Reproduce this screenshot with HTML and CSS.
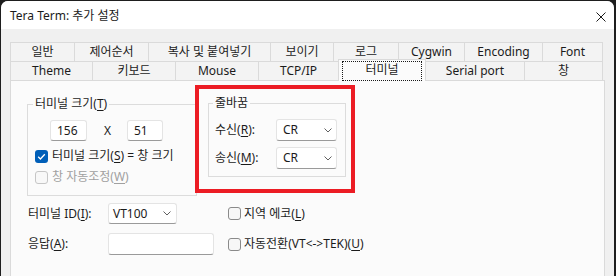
FILE: index.html
```html
<!DOCTYPE html>
<html lang="ko">
<head>
<meta charset="utf-8">
<title>Tera Term: 추가 설정</title>
<link rel="stylesheet" href="styles.css">
</head>
<body>
<div class="window">
  <div class="titlebar">
    <span class="title">Tera Term: 추가 설정</span>
    <svg class="close" width="10" height="10" viewBox="0 0 10 10"><path d="M0.5 0.5L9.5 9.5M9.5 0.5L0.5 9.5" stroke="#1a1a1a" stroke-width="1" fill="none"/></svg>
  </div>
  <div class="tabs">
    <div class="tabrow row1">
      <div class="tab">일반</div>
      <div class="tab">제어순서</div>
      <div class="tab">복사 및 붙여넣기</div>
      <div class="tab">보이기</div>
      <div class="tab">로그</div>
      <div class="tab">Cygwin</div>
      <div class="tab">Encoding</div>
      <div class="tab last">Font</div>
    </div>
    <div class="tabrow row2">
      <div class="tab">Theme</div>
      <div class="tab">키보드</div>
      <div class="tab">Mouse</div>
      <div class="tab">TCP/IP</div>
      <div class="tab selected"><span class="focus">터미널</span></div>
      <div class="tab">Serial port</div>
      <div class="tab last">창</div>
    </div>
  </div>
  <div class="panel">
    <div class="top">
      <fieldset class="group g1">
        <legend>터미널 크기(<u>T</u>)</legend>
        <div class="sizerow">
          <div class="edit w37">156</div>
          <span class="x">X</span>
          <div class="edit w36">51</div>
        </div>
        <div class="check first"><span class="box checked"><svg width="13" height="13" viewBox="0 0 13 13"><path d="M3.2 6.8L5.4 9L9.8 4.3" stroke="#fff" stroke-width="1.3" fill="none"/></svg></span><span>터미널 크기(<u>S</u>) = 창 크기</span></div>
        <div class="check disabled"><span class="box"></span><span>창 자동조정(<u>W</u>)</span></div>
      </fieldset>
      <fieldset class="group g2">
        <legend>줄바꿈</legend>
        <div class="crrow first">
          <span class="lbl">수신(<u>R</u>):</span>
          <div class="combo w61"><span>CR</span><svg width="8" height="5" viewBox="0 0 8 5"><path d="M0.5 0.5L4 4L7.5 0.5" stroke="#606060" fill="none"/></svg></div>
        </div>
        <div class="crrow">
          <span class="lbl">송신(<u>M</u>):</span>
          <div class="combo w61"><span>CR</span><svg width="8" height="5" viewBox="0 0 8 5"><path d="M0.5 0.5L4 4L7.5 0.5" stroke="#606060" fill="none"/></svg></div>
        </div>
      </fieldset>
    </div>
    <div class="bottom">
      <span class="lbl">터미널 ID(<u>I</u>):</span>
      <div class="combo w69"><span>VT100</span><svg width="8" height="5" viewBox="0 0 8 5"><path d="M0.5 0.5L4 4L7.5 0.5" stroke="#606060" fill="none"/></svg></div>
      <div class="check"><span class="box"></span><span>지역 에코(<u>L</u>)</span></div>
      <span class="lbl">응답(<u>A</u>):</span>
      <div class="edit w106"></div>
      <div class="check"><span class="box"></span><span>자동전환(VT&lt;-&gt;TEK)(<u>U</u>)</span></div>
    </div>
    <div class="highlight"></div>
  </div>
</div>
</body>
</html>
```
FILE: styles.css
```css
* { box-sizing: border-box; }
body {
  margin: 0;
  background: #1e1e1e;
  font: 12px/16px "Noto Sans", "Noto Sans CJK KR", sans-serif;
  color: #1b1b1b;
  overflow: hidden;
}
u { text-decoration: underline; text-underline-offset: 2px; text-decoration-thickness: 1px; }
.window {
  margin: 1px 0 0 1px;
  width: 613px;
  height: 275px;
  background: #f0f0f0;
  border-radius: 7px 7px 0 0;
  overflow: hidden;
}
.titlebar {
  height: 28px;
  background: #ffffff;
  display: flex;
  align-items: center;
  justify-content: space-between;
  padding: 1px 8px 0 9px;
}
.close { margin-top: 2px; }

.tabs { margin: 13px 0 0 9px; width: 593px; }
.tabrow { display: flex; height: 19px; }
.tab {
  height: 19px;
  border-top: 1px solid #dadada;
  border-left: 1px solid #dadada;
  background: #f3f3f3;
  text-align: center;
  line-height: 17px;
  white-space: nowrap;
}
.tab.last { border-right: 1px solid #dadada; }
.row1 .tab:nth-child(1) { width: 64px; }
.row1 .tab:nth-child(2) { width: 74px; }
.row1 .tab:nth-child(3) { width: 122px; }
.row1 .tab:nth-child(4) { width: 63px; }
.row1 .tab:nth-child(5) { width: 65px; }
.row1 .tab:nth-child(6) { width: 66px; }
.row1 .tab:nth-child(7) { width: 78px; }
.row1 .tab:nth-child(8) { width: 61px; }
.row2 .tab:nth-child(1) { width: 82px; }
.row2 .tab:nth-child(2) { width: 83px; }
.row2 .tab:nth-child(3) { width: 83px; }
.row2 .tab:nth-child(4) { width: 80px; }
.row2 .tab:nth-child(5) { width: 88px; }
.row2 .tab:nth-child(6) { width: 98px; }
.row2 .tab:nth-child(7) { width: 79px; }
.row2 .tab:nth-child(6) { border-left: 1px solid #dadada; }
.tab.selected {
  position: relative;
  z-index: 2;
  height: 22px;
  margin-top: -2px;
  background: #fbfbfb;
  border-right: 1px solid #dadada;
  padding: 1px 3px 0 3px;
}
.tab.selected + .tab { border-left: none; }
.focus {
  display: block;
  height: 20px;
  border: 1px dotted #1a1a1a;
  line-height: 16px;
}

.panel {
  position: relative;
  margin-left: 9px;
  width: 595px;
  height: 220px;
  border: 1px solid #dadada;
  background: #fbfbfb;
}
.top { display: flex; align-items: flex-start; }
.group {
  margin: 0;
  padding: 0;
  border: 1px solid #dcdcdc;
  min-width: 0;
}
.group legend {
  padding: 0 2px;
  margin-left: 5px;
  line-height: 16px;
}
.g1 {
  margin: 15px 0 0 16px;
  width: 170px;
  padding-bottom: 10px;
}
.g2 {
  margin: 14px 0 0 11px;
  width: 138px;
  padding-bottom: 7px;
}
.g2 legend { margin-left: 4px; }

.sizerow {
  display: flex;
  align-items: center;
  margin: 8px 0 0 22px;
}
.x { width: 40px; text-align: center; padding-left: 1px; }
.edit {
  height: 21px;
  background: #ffffff;
  border: 1px solid #e4e4e4;
  border-bottom-color: #9a9a9a;
  border-radius: 3px;
  padding: 1px 0 0 6px;
  line-height: 17px;
}
.w36 { width: 36px; }
.w37 { width: 37px; }
.w106 { width: 106px; height: 22px; }

.check { display: flex; align-items: center; gap: 4px; }
.g1 .check { margin-left: 7px; }
.g1 .check.first { margin-top: 7px; }
.g1 .check.disabled { margin-top: 5px; color: #a0a0a0; }
.box {
  width: 13px;
  height: 13px;
  border: 1px solid #8a8a8a;
  border-radius: 3px;
  background: #f7f7f7;
  flex: none;
}
.box.checked {
  border: none;
  background: #005fb8;
}
.box.checked svg { display: block; }
.disabled .box { border-color: #c6c6c6; background: #f8f8f8; }

.crrow {
  display: flex;
  align-items: center;
  justify-content: space-between;
  margin: 6px 8px 0 6px;
}
.crrow.first { margin-top: 8px; }
.combo {
  height: 22px;
  background: #ffffff;
  border: 1px solid #e4e4e4;
  border-bottom-color: #9a9a9a;
  border-radius: 3px;
  display: flex;
  align-items: center;
  justify-content: space-between;
  padding: 0 4px 0 6px;
}
.combo svg { display: block; }
.w61 { width: 61px; }
.w69 { width: 69px; height: 21px; padding-left: 4px; padding-right: 5px; }

.bottom {
  display: grid;
  grid-template-columns: 80px 120px auto;
  grid-template-rows: 21px 22px;
  row-gap: 9px;
  align-items: center;
  margin: 7px 0 0 17px;
}
.bottom .check { gap: 3px; }

.highlight {
  position: absolute;
  left: 184px;
  top: 4px;
  width: 160px;
  height: 108px;
  border: 4px solid #ec1c24;
}
```
